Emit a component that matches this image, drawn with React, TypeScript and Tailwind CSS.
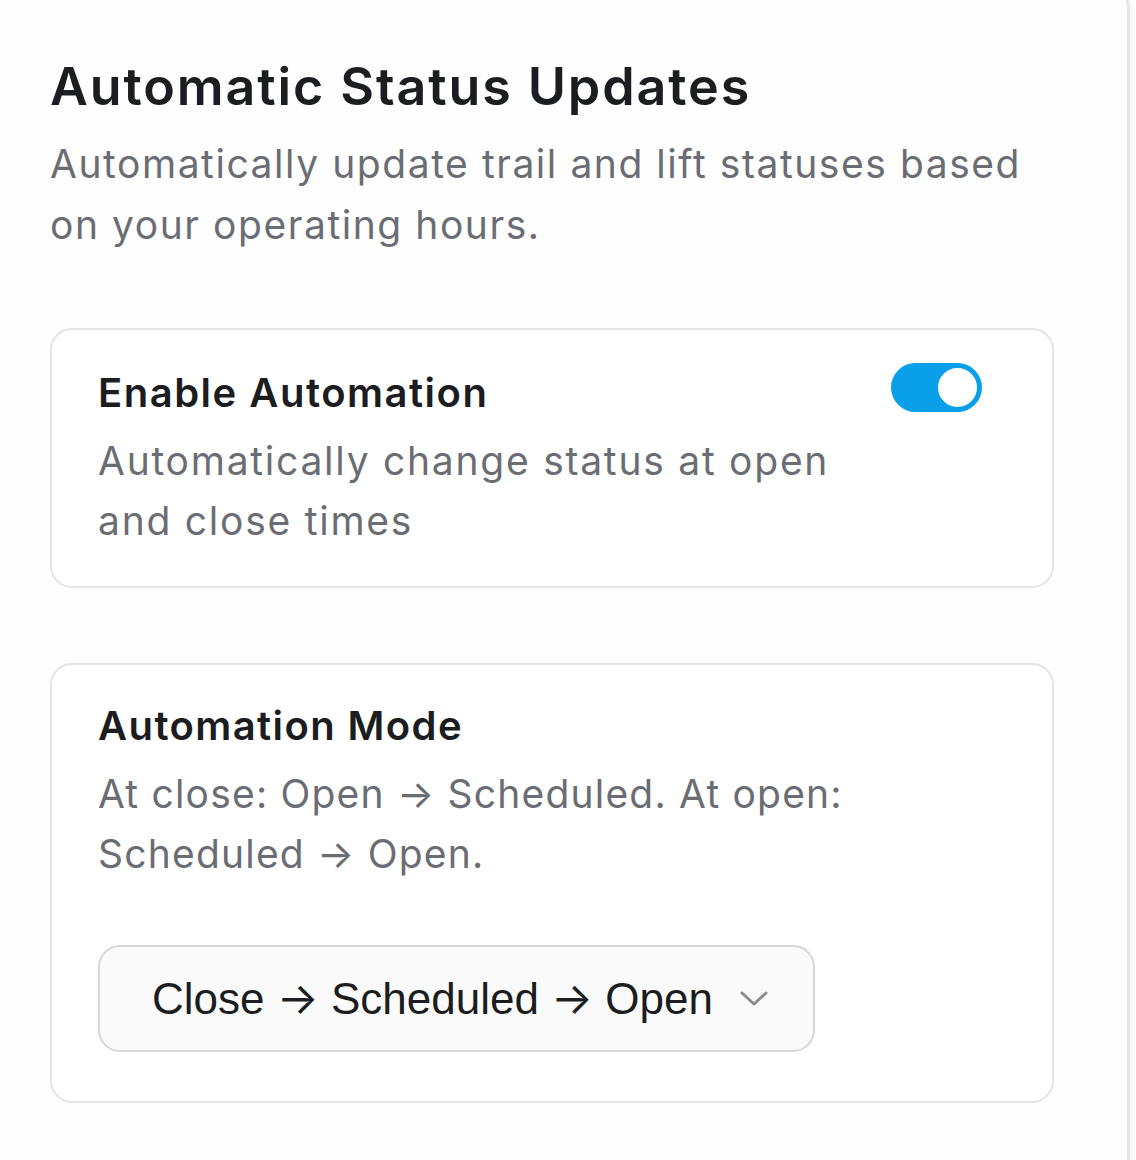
import React from "react";

function Toggle() {
  return (
    <div className="flex h-[49px] w-[91px] shrink-0 items-center justify-end rounded-full bg-[#0aa0e9] p-[3px]">
      <div className="h-[43px] w-[43px] rounded-full border-[2px] border-[#0aa0e9] bg-white" />
    </div>
  );
}

const Arrow = () => <span style={{ fontFamily: "Inter, sans-serif" }}>→</span>;

export default function App() {
  const sans = { fontFamily: "Inter, 'Noto Sans', sans-serif" } as React.CSSProperties;
  return (
    <div className="h-[1160px] w-[1136px] overflow-hidden bg-white" style={sans}>
      <div className="-mt-[14px] h-[1200px] w-[1130px] rounded-tr-[22px] border-r-[3px] border-t-[2px] border-[#e6e6e8] bg-[#fefefe] pl-[50px] pt-[69px] shadow-[2px_0_4px_rgba(0,0,0,0.04)]">
        <h1 className="text-[52px] font-semibold leading-[60px] tracking-[1.9px] text-[#1b1d21]">
          Automatic Status Updates
        </h1>
        <p className="mt-[16px] w-[1040px] text-[39px] leading-[61px] tracking-[1.55px] text-[#6a6d73]">
          Automatically update trail and lift statuses based
          <br />
          on your operating hours.
        </p>

        <div className="mt-[73px] w-[1004px] rounded-[22px] border-[2px] border-[#e4e4e7] bg-white pb-[35px] pl-[46px] pr-[70px] pt-[33px]">
          <div className="flex items-start justify-between">
            <div className="pt-[6px]">
              <div className="text-[40px] font-semibold leading-[48px] tracking-[1.5px] text-[#1b1d21]">Enable Automation</div>
              <p className="mt-[14px] whitespace-nowrap text-[39px] leading-[60px] tracking-[1.75px] text-[#6a6d73]">
                Automatically change status at open
                <br />
                and close times
              </p>
            </div>
            <Toggle />
          </div>
        </div>

        <div className="mt-[75px] w-[1004px] rounded-[22px] border-[2px] border-[#e4e4e7] bg-white pb-[49px] pl-[46px] pt-[37px]">
          <div className="text-[40px] font-semibold leading-[48px] tracking-[1.4px] text-[#1b1d21]">Automation Mode</div>
          <p className="mt-[14px] whitespace-nowrap text-[39px] leading-[60px] tracking-[1.2px] text-[#6a6d73]">
            At close: Open → Scheduled. At open:
            <br />
            Scheduled → Open.
          </p>
          <div
            className="mt-[61px] flex h-[107px] w-[717px] items-center rounded-[22px] border-[2px] border-[#d6d6da] bg-[#fafafa] pl-[52px] pr-[45px]"
            style={{ fontFamily: "'Liberation Sans', Arial, sans-serif" }}
          >
            <span className="whitespace-nowrap text-[44px] leading-none text-[#1b1d21]">
              Close <Arrow /> Scheduled <Arrow /> Open
            </span>
            <svg className="ml-auto" width="28" height="16" viewBox="0 0 28 16" fill="none">
              <path d="M2 2 L14 13 L26 2" stroke="#8b8b90" strokeWidth="3" strokeLinecap="round" strokeLinejoin="round" />
            </svg>
          </div>
        </div>
      </div>
    </div>
  );
}
